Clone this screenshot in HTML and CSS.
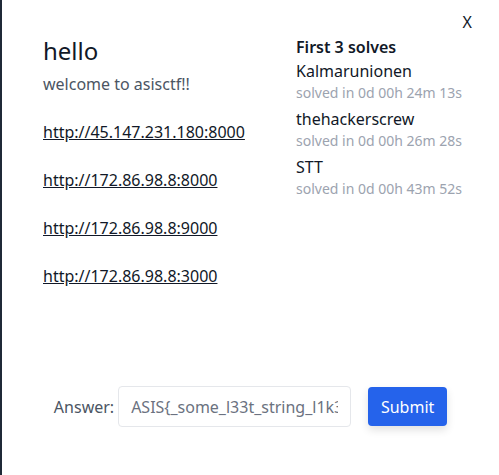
FILE: index.html
```html
<!DOCTYPE html>
<html>
<head>
<meta charset="utf-8">
<link rel="stylesheet" href="styles.css">
</head>
<body>
<div class="page">
  <div class="modal">
    <button class="close">X</button>
    <div class="columns">
      <div class="info">
        <h1 class="title">hello</h1>
        <p class="desc">welcome to asisctf!!</p>
        <a class="link" href="#">http://45.147.231.180:8000</a>
        <a class="link" href="#">http://172.86.98.8:8000</a>
        <a class="link" href="#">http://172.86.98.8:9000</a>
        <a class="link" href="#">http://172.86.98.8:3000</a>
      </div>
      <div class="solves">
        <div class="solves-title">First 3 solves</div>
        <div class="solve">
          <div class="team">Kalmarunionen</div>
          <div class="time">solved in 0d 00h 24m 13s</div>
        </div>
        <div class="solve">
          <div class="team">thehackerscrew</div>
          <div class="time">solved in 0d 00h 26m 28s</div>
        </div>
        <div class="solve">
          <div class="team">STT</div>
          <div class="time">solved in 0d 00h 43m 52s</div>
        </div>
      </div>
    </div>
    <form class="answer">
      <label class="answer-label">Answer:</label>
      <input class="answer-input" type="text" value="ASIS{_some_l33t_string_l1k3_this}">
      <button class="submit" type="button">Submit</button>
    </form>
  </div>
</div>
</body>
</html>
```
FILE: styles.css
```css
html, body {
  margin: 0;
  padding: 0;
  background: #ffffff;
}
body {
  font-family: "Noto Sans", "Lato", sans-serif;
  color: #111827;
}
.page {
  height: 475px;
  border-left: 2px solid #1f2937;
  box-sizing: border-box;
}
.modal {
  position: relative;
  height: 100%;
}
.close {
  position: absolute;
  top: 12px;
  right: 27px;
  background: none;
  border: none;
  padding: 0;
  font-family: inherit;
  font-size: 16px;
  line-height: 20px;
  color: #111827;
}
.columns {
  display: flex;
  padding: 35px 0 0 41px;
}
.info {
  width: 253px;
  display: flex;
  flex-direction: column;
  align-items: flex-start;
}
.title {
  margin: 0;
  font-size: 24px;
  font-weight: 400;
  line-height: 32px;
}
.desc {
  margin: 5px 0 0;
  font-size: 16px;
  line-height: 24px;
  color: #4b5563;
}
.link {
  margin-top: 24px;
  font-size: 16px;
  line-height: 24px;
  color: #111827;
  text-decoration: underline;
}
.solves {
  display: flex;
  flex-direction: column;
}
.solves-title {
  font-size: 16px;
  font-weight: 600;
  line-height: 24px;
}
.team {
  font-size: 16px;
  line-height: 24px;
}
.time {
  font-size: 14px;
  line-height: 20px;
  color: #9ca3af;
}
.solve + .solve {
  margin-top: 4px;
}
.answer {
  display: flex;
  justify-content: center;
  align-items: center;
  margin-top: 98px;
}
.answer-label {
  font-size: 16px;
  color: #4b5563;
  margin-right: 4px;
}
.answer-input {
  width: 233px;
  height: 41px;
  box-sizing: border-box;
  border: 1px solid #e5e7eb;
  border-radius: 4px;
  padding: 0 12px;
  font-family: inherit;
  font-size: 16px;
  color: #6b7280;
}
.submit {
  margin-left: 17px;
  width: 79px;
  height: 39px;
  background: #2563eb;
  color: #ffffff;
  border: none;
  border-radius: 4px;
  font-family: inherit;
  font-size: 16px;
  box-shadow: 0 4px 8px rgba(0, 0, 0, 0.12);
}
```
